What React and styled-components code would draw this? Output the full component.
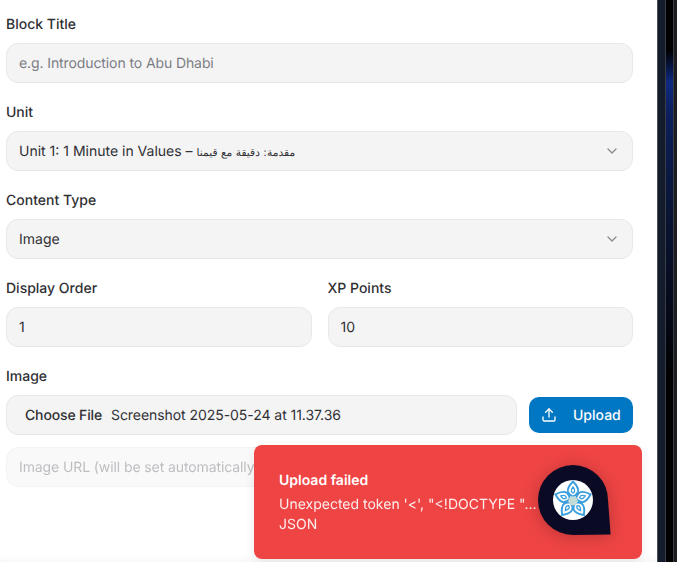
import React from 'react';
import styled, { createGlobalStyle } from 'styled-components';
import { ChevronDown, Upload } from 'lucide-react';

const GlobalStyle = createGlobalStyle`
  html, body {
    margin: 0;
    height: 100%;
    overflow: hidden;
    background: #ffffff;
  }
  body {
    font-family: Inter, "DejaVu Sans", sans-serif;
    font-size: 14px;
    color: #303034;
    text-rendering: geometricPrecision;
  }
  * {
    box-sizing: border-box;
  }
`;

function BubbleLogo() {
  const petals = [0, 72, 144, 216, 288];
  return (
    <BubbleSvg viewBox="0 0 73 71">
      <path d="M35 0 A35 35 0 0 1 70 35 L72.6 69.6 L35 70 A35 35 0 0 1 0 35 A35 35 0 0 1 35 0 Z" fill="#0a0a24" />
      <circle cx="35" cy="35" r="20" fill="#ffffff" />
      {petals.map((angle) => (
        <g key={angle} transform={`rotate(${angle} 35 35)`} fill="none" stroke="#3a9edd">
          <path d="M35 16.5 C38.5 20 41 23 40 26.8 C39.2 29.4 37 30.6 35 31.6 C33 30.6 30.8 29.4 30 26.8 C29 23 31.5 20 35 16.5 Z" strokeWidth="1.9" />
          <path d="M35 22 C36.2 23.6 37 24.8 36.6 26.2 C36.3 27.2 35.6 27.6 35 28 C34.4 27.6 33.7 27.2 33.4 26.2 C33 24.8 33.8 23.6 35 22 Z" strokeWidth="1.3" />
        </g>
      ))}
      <circle cx="35" cy="35.8" r="4.6" fill="#c4dcd6" />
    </BubbleSvg>
  );
}

export default function App() {
  return (
    <Page>
      <GlobalStyle />
      <Panel>
        <Field>
          <Label>Block Title</Label>
          <Input readOnly placeholder="e.g. Introduction to Abu Dhabi" />
        </Field>

        <Field>
          <Label>Unit</Label>
          <Select>
            <span>
              Unit 1: 1 Minute in Values – <ArabicText>مقدمة: دقيقة مع قيمنا</ArabicText>
            </span>
            <ChevronDown size={16} color="#8a8a8f" />
          </Select>
        </Field>

        <Field>
          <Label>Content Type</Label>
          <Select>
            <span>Image</span>
            <ChevronDown size={16} color="#8a8a8f" />
          </Select>
        </Field>

        <TwoColumns>
          <Field>
            <Label>Display Order</Label>
            <Input readOnly value="1" />
          </Field>
          <Field>
            <Label>XP Points</Label>
            <Input readOnly value="10" />
          </Field>
        </TwoColumns>

        <Field>
          <Label>Image</Label>
          <FileRow>
            <FileInput>
              <ChooseFile>Choose File</ChooseFile>
              <FileName>Screenshot 2025-05-24 at 11.37.36</FileName>
            </FileInput>
            <UploadButton>
              <Upload size={16} strokeWidth={2} />
              Upload
            </UploadButton>
          </FileRow>
          <Input disabled placeholder="Image URL (will be set automatically after upload)" />
        </Field>

        <Toast>
          <ToastTitle>Upload failed</ToastTitle>
          <ToastText>
            Unexpected token '&lt;', "&lt;!DOCTYPE "...<ToastTail> is not valid</ToastTail> JSON
          </ToastText>
        </Toast>
        <BubbleLogo />
      </Panel>

      <Backdrop>
        <NavyStripe />
        <BlackStripe />
        <GreyStripe />
      </Backdrop>
    </Page>
  );
}

const Page = styled.div`
  display: flex;
  width: 677px;
  height: 562px;
  overflow: hidden;
`;

const Panel = styled.main`
  position: relative;
  width: 657px;
  height: 562px;
  padding: 14px 24px 0 6px;
  background: #ffffff;
  box-shadow: inset 0 -8px 8px -7px rgba(0, 0, 0, 0.05);
`;

const Field = styled.div`
  display: flex;
  flex-direction: column;
  margin-bottom: 19px;
`;

const Label = styled.label`
  padding-top: 1px;
  font-size: 14px;
  line-height: 20px;
  font-weight: 500;
  color: #303034;
  margin-bottom: 8px;
`;

const Input = styled.input`
  display: block;
  width: 100%;
  height: 40px;
  padding: 0 12px;
  border: 1px solid #e8e8ea;
  border-radius: 12px;
  background: #f4f4f5;
  font-family: inherit;
  font-size: 14px;
  color: #303034;
  outline: none;
  text-rendering: geometricPrecision;

  &::placeholder {
    color: #7d7d84;
    opacity: 1;
    letter-spacing: -0.1px;
  }

  &:disabled {
    opacity: 0.5;
    margin-top: 12px;
  }
`;

const Select = styled.div`
  display: flex;
  align-items: center;
  justify-content: space-between;
  height: 40px;
  padding: 0 12px;
  border: 1px solid #e8e8ea;
  border-radius: 12px;
  background: #f4f4f5;
  color: #303034;
`;

const ArabicText = styled.span`
  font-family: "DejaVu Sans", sans-serif;
  font-size: 10.7px;
`;

const TwoColumns = styled.div`
  display: grid;
  grid-template-columns: 1fr 1fr;
  column-gap: 16px;
`;

const FileRow = styled.div`
  display: flex;
  align-items: center;
  gap: 12px;
`;

const FileInput = styled.div`
  flex: 1;
  display: flex;
  align-items: center;
  height: 40px;
  padding: 0 18px;
  border: 1px solid #e8e8ea;
  border-radius: 12px;
  background: #f4f4f5;
  color: #303034;
`;

const ChooseFile = styled.span`
  font-weight: 500;
  letter-spacing: -0.15px;
  margin-right: 9px;
`;

const FileName = styled.span`
  letter-spacing: -0.06px;
`;

const UploadButton = styled.button`
  display: flex;
  align-items: center;
  gap: 16px;
  width: 104px;
  height: 36px;
  padding: 0 12px;
  border: none;
  border-radius: 10px;
  background: #0077c2;
  color: #ffffff;
  font-family: inherit;
  font-size: 14px;
  font-weight: 500;
  text-rendering: geometricPrecision;
`;

const Toast = styled.div`
  position: absolute;
  left: 254px;
  top: 445px;
  width: 388px;
  height: 114px;
  padding: 26px 24px 0 25px;
  border-radius: 8px;
  background: #ef4444;
  color: #ffffff;
  box-shadow: 0 4px 12px rgba(0, 0, 0, 0.08);
`;

const ToastTitle = styled.div`
  font-size: 14px;
  line-height: 20px;
  font-weight: 600;
`;

const ToastText = styled.div`
  margin-top: 4px;
  font-size: 14px;
  line-height: 20px;
  opacity: 0.9;
`;

const ToastTail = styled.span`
  letter-spacing: -0.4px;
`;

const BubbleSvg = styled.svg`
  position: absolute;
  left: 538px;
  top: 465px;
  width: 73px;
  height: 71px;
  filter: drop-shadow(0 2px 8px rgba(0, 0, 0, 0.22));
`;

const Backdrop = styled.aside`
  display: flex;
  width: 20px;
  height: 562px;
  background: #111;
`;

const NavyStripe = styled.div`
  width: 8px;
  border-left: 1px solid #4a4f58;
  background: #121c2c;
`;

const BlackStripe = styled.div`
  width: 9px;
  border-left: 1px solid #3a3d44;
  border-right: 1px solid #3a3d44;
  background: linear-gradient(
    180deg,
    #000000 0,
    #000000 50px,
    #0e2a80 82px,
    #0c1f5c 115px,
    #0a1638 200px,
    #060b1c 300px,
    #000000 380px,
    #000000 100%
  );
`;

const GreyStripe = styled.div`
  flex: 1;
  background: #1c1d20;
`;
